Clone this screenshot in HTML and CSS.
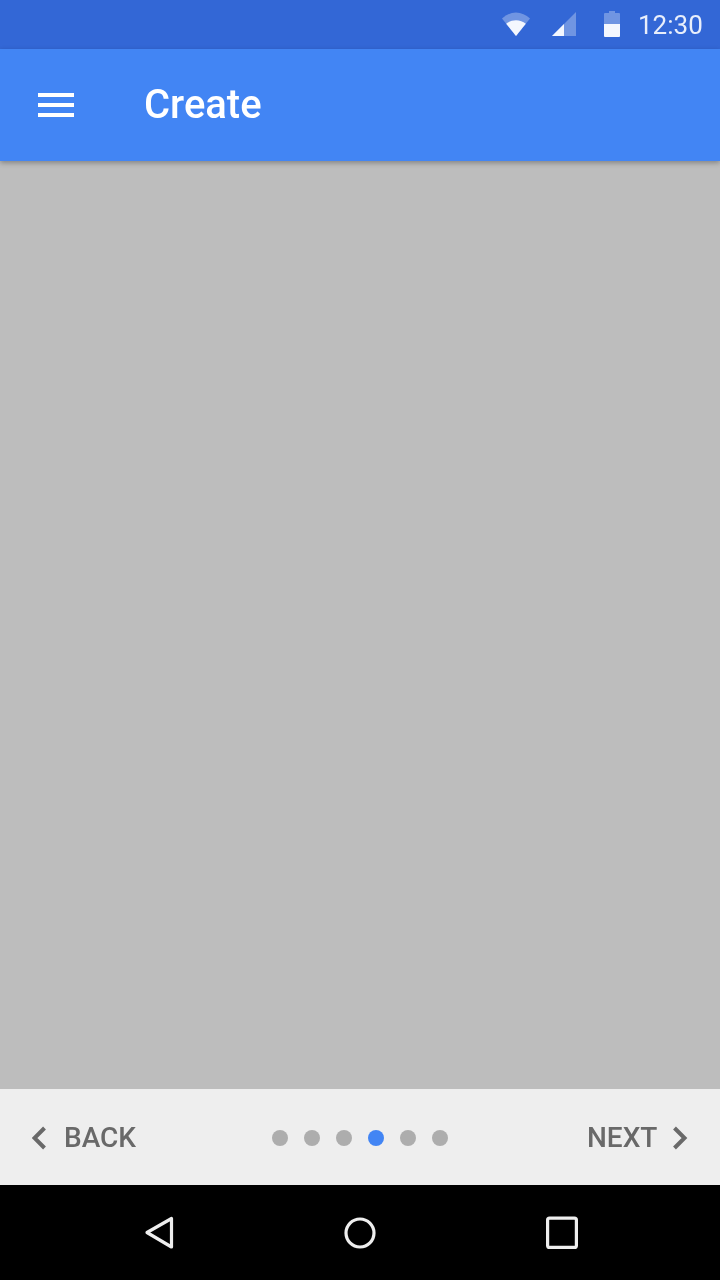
FILE: index.html
```html
<!DOCTYPE html>
<html lang="en">
<head>
<meta charset="utf-8">
<title>Create</title>
<link rel="stylesheet" href="styles.css">
</head>
<body>
  <div class="screen">
    <div class="status-bar">
      <svg class="wifi-icon" viewBox="0 0 28 24">
        <path d="M14 24L0 6.500C4 3 8.800 0.500 14 0.500S24 3 28 6.500z" fill="#fff" fill-opacity="0.3"/>
        <path d="M14 24L4.200 11.800C7 9.600 10.300 8.200 14 8.200s7 1.400 9.800 3.600z" fill="#f4f7fe"/>
      </svg>
      <svg class="signal-icon" viewBox="0 0 24 24">
        <path d="M24 0V24H0z" fill="#fff" fill-opacity="0.3"/>
        <path d="M12 12V24H0z" fill="#f4f7fe"/>
      </svg>
      <svg class="battery-icon" viewBox="0 0 16 26">
        <path d="M5 0H11V2H15A1 1 0 0 1 16 3V13H0V3A1 1 0 0 1 1 2H5z" fill="#fff" fill-opacity="0.3"/>
        <path d="M0 13H16V25A1 1 0 0 1 15 26H1A1 1 0 0 1 0 25z" fill="#f4f7fe"/>
      </svg>
      <span class="clock">12:30</span>
    </div>

    <header class="toolbar">
      <div class="menu-icon">
        <span></span>
        <span></span>
        <span></span>
      </div>
      <h1>Create</h1>
    </header>

    <main class="content"></main>

    <div class="stepper">
      <div class="step-btn">
        <svg class="chevron" viewBox="0 0 16 24"><path d="M12.500 2L2.500 12l10 10" fill="none" stroke="#696969" stroke-width="4"/></svg>
        <span>BACK</span>
      </div>
      <div class="dots">
        <i class="dot"></i>
        <i class="dot"></i>
        <i class="dot"></i>
        <i class="dot active"></i>
        <i class="dot"></i>
        <i class="dot"></i>
      </div>
      <div class="step-btn next">
        <span>NEXT</span>
        <svg class="chevron" viewBox="0 0 16 24"><path d="M2.500 2l10 10-10 10" fill="none" stroke="#696969" stroke-width="4"/></svg>
      </div>
    </div>

    <nav class="nav-bar">
      <svg class="nav-icon" viewBox="0 0 32 36"><path d="M3 17.500L27.500 3.500V32z" fill="none" stroke="#eee" stroke-width="3.200" stroke-linejoin="round"/></svg>
      <svg class="nav-icon home" viewBox="0 0 32 36"><circle cx="16" cy="18" r="14" fill="none" stroke="#eee" stroke-width="3.200"/></svg>
      <svg class="nav-icon" viewBox="0 0 32 36"><rect x="1.600" y="3.100" width="28.800" height="29.300" rx="2" fill="none" stroke="#eee" stroke-width="3.200"/></svg>
    </nav>
  </div>
</body>
</html>
```

FILE: styles.css
```css
* {
  box-sizing: border-box;
}

html,
body {
  margin: 0;
  height: 100%;
}

body {
  font-family: Roboto, "Noto Sans", sans-serif;
  background: #bdbdbd;
}

.screen {
  display: flex;
  flex-direction: column;
  height: 1280px;
  overflow: hidden;
}

.status-bar {
  display: flex;
  align-items: center;
  flex: 0 0 49px;
  padding: 0 17.700px 1px 0;
  justify-content: flex-end;
  background: #3367d6;
}

.wifi-icon {
  width: 28px;
  height: 24px;
  margin-right: 22px;
}

.signal-icon {
  width: 24px;
  height: 24px;
  margin-right: 28px;
}

.battery-icon {
  width: 16px;
  height: 26px;
  margin-right: 17.700px;
}

.clock {
  margin-top: 2px;
  font-size: 26px;
  color: #e8eefb;
  will-change: transform;
}

.toolbar {
  position: relative;
  z-index: 1;
  display: flex;
  align-items: center;
  flex: 0 0 112px;
  padding-left: 38px;
  background: #4285f4;
  box-shadow: 0 2px 5px rgba(0, 0, 0, 0.3);
}

.menu-icon {
  display: flex;
  flex-direction: column;
  gap: 6px;
  width: 36px;
  margin-right: 70px;
}

.menu-icon span {
  height: 4px;
  background: #fff;
}

.toolbar h1 {
  margin: 0 0 2px;
  font-size: 40px;
  font-weight: 500;
  color: #fff;
  will-change: transform;
}

.content {
  flex: 1;
  background: #bdbdbd;
}

.stepper {
  display: flex;
  align-items: center;
  justify-content: space-between;
  flex: 0 0 96px;
  padding: 0 32px;
  background: #eee;
}

.step-btn {
  display: flex;
  align-items: center;
  gap: 16px;
  font-size: 28px;
  font-weight: 500;
  color: #696969;
  will-change: transform;
}

.step-btn.next {
  gap: 15px;
}

.chevron {
  width: 16px;
  height: 24px;
}

.dots {
  display: flex;
  gap: 16px;
  margin: 2px 3.500px 0 0;
}

.dot {
  width: 16px;
  height: 16px;
  border-radius: 50%;
  background: #adadad;
}

.dot.active {
  background: #4285f4;
}

.nav-bar {
  display: flex;
  align-items: center;
  justify-content: space-between;
  flex: 0 0 95px;
  padding: 0 142px 0 144px;
  background: #000;
}

.nav-icon {
  width: 32px;
  height: 36px;
}

.nav-icon.home {
  margin-right: 2px;
}
```
